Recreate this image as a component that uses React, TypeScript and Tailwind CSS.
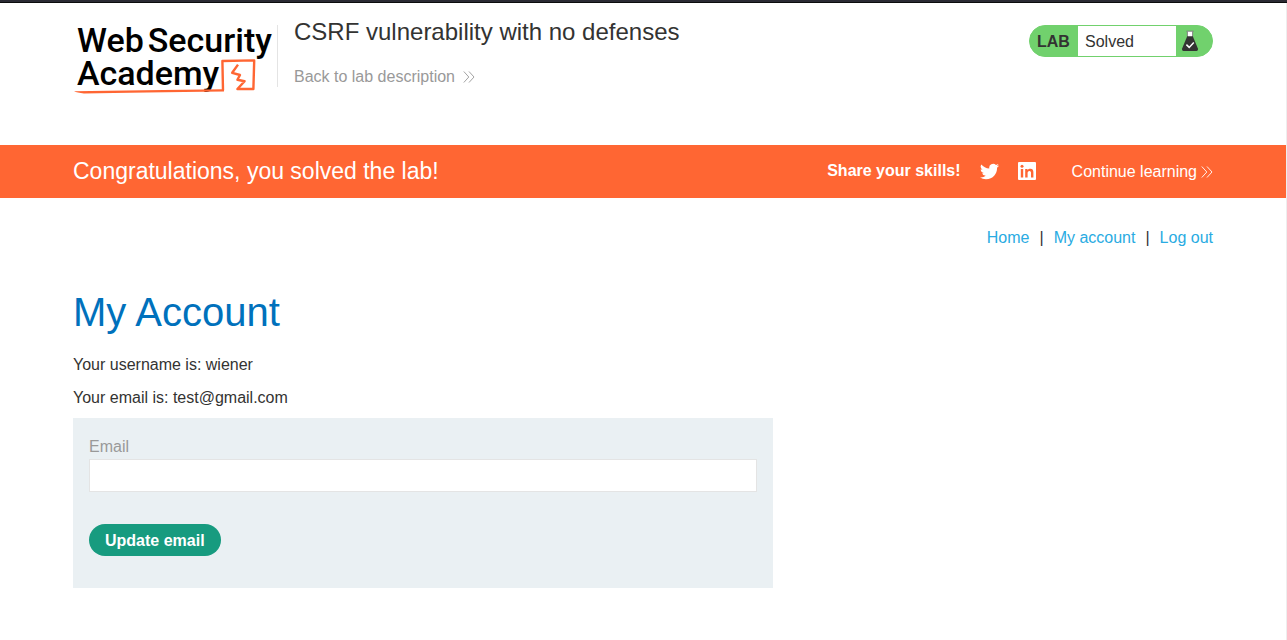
import type { ReactNode } from "react";

function Container({ className = "", children }: { className?: string; children: ReactNode }) {
  return <div className={`mx-auto w-full max-w-[1140px] ${className}`}>{children}</div>;
}

function DoubleChevron({ className = "" }: { className?: string }) {
  return (
    <svg viewBox="0 0 12 12" className={`size-3 shrink-0 ${className}`} fill="none" stroke="currentColor" aria-hidden="true">
      <path d="M0.8 0.5 L5.8 6 L0.8 11.5 M6 0.5 L11 6 L6 11.5" strokeWidth="0.9" />
    </svg>
  );
}

function Logo() {
  return (
    <a href="#home" className="relative block h-[72px] w-[200px] pt-px pl-1 font-[Roboto,sans-serif] text-[34px] leading-[33px] font-medium text-black">
      <span className="flex gap-1 whitespace-nowrap">
        <span>Web</span>
        <span>Security</span>
      </span>
      <span className="block whitespace-nowrap">Academy</span>
      <svg viewBox="73 23 200 72" className="absolute inset-0 h-[72px] w-[200px]" fill="none" stroke="#ff6633" aria-hidden="true">
        <path d="M74 91.2 Q140 90.4 224 89.2 L224 91.4 Q140 92.4 84 93.4 Q77 92.8 74 91.2 Z" fill="#ff6633" stroke="none" />
        <path d="M223 90.2 L222.4 61 L254.2 60.4 L253.4 89 L237.4 89 L244.6 81.2 L237.4 79.8 L240 75 L232.2 72.8 L238 64.6" strokeWidth="2.4" strokeLinejoin="round" />
      </svg>
    </a>
  );
}

function Flask() {
  return (
    <svg viewBox="0 0 18 22" className="h-[22px] w-[18px]" aria-hidden="true">
      <rect x="6.2" y="1.2" width="5.6" height="6" fill="#fff" />
      <path d="M5.4 1.2 H12.6 M6.4 1.5 V7 M11.6 1.5 V7" stroke="#777" strokeWidth="0.9" fill="none" />
      <path d="M6.2 6.2 H11.8 L17 18.8 Q17.4 20.8 15.6 20.9 H2.4 Q0.6 20.8 1 18.8 Z" fill="#333332" />
      <path d="M5.4 14.6 L8.2 17.4 L12.8 12.6" stroke="#fff" strokeWidth="1.5" fill="none" />
    </svg>
  );
}

function Twitter() {
  return (
    <svg viewBox="0 0 24 24" className="size-[19px]" fill="currentColor" aria-hidden="true">
      <path d="M23.95 4.57a10 10 0 0 1-2.82.77 4.96 4.96 0 0 0 2.16-2.72c-.95.55-2 .95-3.13 1.18a4.92 4.92 0 0 0-8.38 4.48C7.69 8.1 4.07 6.13 1.64 3.16a4.92 4.92 0 0 0 1.52 6.57 4.9 4.9 0 0 1-2.23-.61v.06a4.92 4.92 0 0 0 3.95 4.83 5 5 0 0 1-2.21.08 4.94 4.94 0 0 0 4.6 3.42A9.87 9.87 0 0 1 0 19.54a13.99 13.99 0 0 0 7.55 2.21c9.05 0 14-7.5 14-13.98 0-.21 0-.42-.02-.63a9.94 9.94 0 0 0 2.46-2.55z" />
    </svg>
  );
}

function LinkedIn() {
  return (
    <svg viewBox="0 0 20 20" className="size-5" aria-hidden="true">
      <rect x="1" y="1" width="18" height="18" rx="1" fill="#fff" />
      <path d="M3.8 8 H6.2 V16.4 H3.8 Z M8.2 8 H10.5 V9.2 C11.2 8.2 12.2 7.8 13.4 7.8 C15.8 7.8 16.4 9.4 16.4 11.6 V16.4 H14 V12.1 C14 11 13.7 10 12.5 10 C11.1 10 10.6 11 10.6 12 V16.4 H8.2 Z" fill="#ff6633" />
      <circle cx="5" cy="5.2" r="1.5" fill="#ff6633" />
    </svg>
  );
}

export default function App() {
  return (
    <div className="flex min-h-screen flex-col bg-white font-['Liberation_Sans',Arial,sans-serif] text-base text-[#333332]">
      <div className="h-[3px] border-b border-[#0c0c0d] bg-[#2b2a33]" />
      <div className="flex-1 border-r border-[#eeeeee]">
        <header className="h-[142px] pt-5">
          <Container className="flex items-start">
            <Logo />
            <div className="mt-0.5 ml-1 h-[62px] border-l border-[#e4e4e4] pl-4">
              <h2 className="-mt-2 text-2xl leading-[30px]">CSRF vulnerability with no defenses</h2>
              <a href="#description" className="mt-5 flex items-center gap-2 leading-5 text-[#999999]">
                Back to lab description
                <DoubleChevron />
              </a>
            </div>
            <div className="mt-0.5 ml-auto flex h-8 w-[184px] items-stretch overflow-hidden rounded-full border border-[#71d16d] bg-[#71d16d]">
              <span className="flex w-12 items-center pt-0.5 pl-[7px] font-bold">LAB</span>
              <span className="flex flex-1 items-center bg-white pt-0.5 pl-[7px]">Solved</span>
              <span className="flex w-9 items-center pl-[5px]">
                <Flask />
              </span>
            </div>
          </Container>
        </header>

        <section className="bg-[#ff6633] text-white">
          <Container className="flex h-[53px] items-center">
            <h4 className="text-[23px]">Congratulations, you solved the lab!</h4>
            <div className="ml-auto flex items-center pb-0.5">
              <span className="font-bold">Share your skills!</span>
              <a href="#twitter" aria-label="Twitter" className="mt-px ml-[19px]">
                <Twitter />
              </a>
              <a href="#linkedin" aria-label="LinkedIn" className="mt-px ml-[18px]">
                <LinkedIn />
              </a>
            </div>
            <a href="#learning" className="ml-[35px] flex items-center gap-1">
              Continue learning
              <DoubleChevron />
            </a>
          </Container>
        </section>

        <Container>
          <nav className="flex justify-end gap-2 pt-7 leading-6 text-[#29abe2]">
            <a href="#home">Home</a>
            <span className="px-0.5 text-[#333332]">|</span>
            <a href="#account">My account</a>
            <span className="px-0.5 text-[#333332]">|</span>
            <a href="#logout">Log out</a>
          </nav>
          <main className="pt-[38px]">
            <h1 className="text-[40px] leading-12 text-[#0071bc]">My Account</h1>
            <p className="mt-[19px] leading-5">Your username is: wiener</p>
            <p className="mt-[13px] leading-5">Your email is: test@gmail.com</p>
            <form className="mt-2.5 max-w-[700px] bg-[#eaf0f3] px-4 pt-[17px] pb-8" onSubmit={(e) => e.preventDefault()}>
              <label htmlFor="email" className="block leading-6 text-[#999999]">
                Email
              </label>
              <input
                id="email"
                type="email"
                className="block h-[33px] w-full border border-[#e4e4e4] bg-white px-2 text-[#333332] outline-none"
              />
              <button type="submit" className="mt-8 h-8 rounded-full bg-[#179b7f] px-4 pt-0.5 font-bold text-white">
                Update email
              </button>
            </form>
          </main>
        </Container>
      </div>
    </div>
  );
}
